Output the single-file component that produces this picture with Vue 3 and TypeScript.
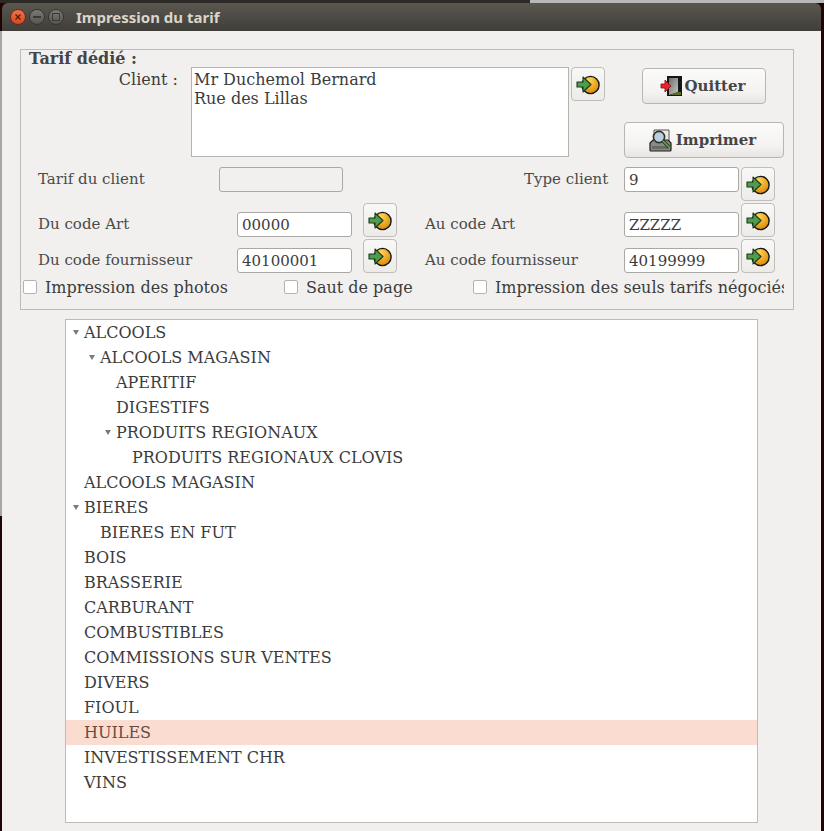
<script setup lang="ts">
interface TreeRow {
  label: string
  level: number
  open?: boolean
  selected?: boolean
}

const rows: TreeRow[] = [
  { label: 'ALCOOLS', level: 0, open: true },
  { label: 'ALCOOLS MAGASIN', level: 1, open: true },
  { label: 'APERITIF', level: 2 },
  { label: 'DIGESTIFS', level: 2 },
  { label: 'PRODUITS REGIONAUX', level: 2, open: true },
  { label: 'PRODUITS REGIONAUX CLOVIS', level: 3 },
  { label: 'ALCOOLS MAGASIN', level: 0 },
  { label: 'BIERES', level: 0, open: true },
  { label: 'BIERES EN FUT', level: 1 },
  { label: 'BOIS', level: 0 },
  { label: 'BRASSERIE', level: 0 },
  { label: 'CARBURANT', level: 0 },
  { label: 'COMBUSTIBLES', level: 0 },
  { label: 'COMMISSIONS SUR VENTES', level: 0 },
  { label: 'DIVERS', level: 0 },
  { label: 'FIOUL', level: 0 },
  { label: 'HUILES', level: 0, selected: true },
  { label: 'INVESTISSEMENT CHR', level: 0 },
  { label: 'VINS', level: 0 }
]

const codeRows = [
  { left: 'Du code Art', from: '00000', right: 'Au code Art', to: 'ZZZZZ' },
  { left: 'Du code fournisseur', from: '40100001', right: 'Au code fournisseur', to: '40199999' }
]
</script>

<template>
  <div class="desktop">
    <div class="window">
      <div class="titlebar">
        <span class="ctl close">
          <svg width="8" height="8" viewBox="0 0 8 8"><path d="M1.5 1.5l5 5M6.5 1.5l-5 5" stroke="#5a1a08" stroke-width="1.3" /></svg>
        </span>
        <span class="ctl"><span class="minus"></span></span>
        <span class="ctl"><span class="square"></span></span>
        <span class="title">Impression du tarif</span>
      </div>
      <div class="body">
        <fieldset class="group">
          <div class="legend">Tarif dédié :</div>
          <div class="client-row">
            <span class="client-label">Client :</span>
            <div class="client-box">Mr Duchemol Bernard<br />Rue des Lillas</div>
            <button class="go go-client"><svg class="go-icon" viewBox="0 0 24 20"><use href="#go" /></svg></button>
            <div class="actions">
              <button class="action quit">
                <svg width="23" height="22" viewBox="0 0 23 22">
                  <defs>
                    <linearGradient id="door" x1="0" y1="0" x2="1" y2="1">
                      <stop offset="0" stop-color="#6f716e" />
                      <stop offset="1" stop-color="#c4c6c2" />
                    </linearGradient>
                  </defs>
                  <rect x="7" y="1" width="15" height="20" fill="#161616" />
                  <path d="M9 3h9v14l-9 3z" fill="url(#door)" />
                  <path d="M18 17l3-0v3H10z" fill="#5c6a2c" />
                  <path d="M1 9h4V5l6 6-6 6v-4H1z" fill="#e8232c" stroke="#96101a" stroke-width=".9" stroke-linejoin="round" />
                </svg>
                Quitter
              </button>
              <button class="action print">
                <svg width="23" height="23" viewBox="0 0 23 23">
                  <path d="M5 1h15v12H5z" fill="#eceae6" stroke="#555" />
                  <path d="M1 14l3-3h15l3 3v7a1 1 0 0 1-1 1H2a1 1 0 0 1-1-1z" fill="#8a8a86" stroke="#1e1e1e" stroke-width="1.2" />
                  <path d="M3 17h17v3H3z" fill="#6a6a67" />
                  <circle cx="10" cy="8" r="5.6" fill="#b9cede" stroke="#2f2f2f" stroke-width="1.6" />
                  <path d="M14 12l6 6" stroke="#1f3a18" stroke-width="3.4" />
                  <path d="M14 12l6 6" stroke="#6aa84a" stroke-width="1.7" />
                </svg>
                Imprimer
              </button>
            </div>
          </div>

          <div class="form-row tarif-row">
            <span class="label first">Tarif du client</span>
            <span class="input empty"></span>
            <span class="label type-label">Type client</span>
            <span class="input right-input">9</span>
            <button class="go go-type"><svg class="go-icon" viewBox="0 0 24 20"><use href="#go" /></svg></button>
          </div>

          <div v-for="row in codeRows" :key="row.left" class="form-row code-row">
            <span class="label first">{{ row.left }}</span>
            <span class="input">{{ row.from }}</span>
            <button class="go"><svg class="go-icon" viewBox="0 0 24 20"><use href="#go" /></svg></button>
            <span class="label second">{{ row.right }}</span>
            <span class="input right-input">{{ row.to }}</span>
            <button class="go"><svg class="go-icon" viewBox="0 0 24 20"><use href="#go" /></svg></button>
          </div>

          <div class="checks">
            <label class="check c1"><span class="box"></span>Impression des photos</label>
            <label class="check c2"><span class="box"></span>Saut de page</label>
            <label class="check c3"><span class="box"></span><span class="clip">Impression des seuls tarifs négociés</span></label>
          </div>
        </fieldset>

        <div class="tree">
          <div
            v-for="(row, i) in rows"
            :key="i"
            class="tree-row"
            :class="{ selected: row.selected }"
            :style="{ paddingLeft: 18 + row.level * 16 + 'px' }"
          >
            <span v-if="row.open" class="arrow"></span>
            {{ row.label }}
          </div>
        </div>
      </div>
    </div>

    <svg width="0" height="0" class="defs">
      <defs>
        <radialGradient id="ball" cx="40%" cy="25%" r="80%">
          <stop offset="0" stop-color="#ffd65a" />
          <stop offset="1" stop-color="#d98600" />
        </radialGradient>
        <g id="go">
          <circle cx="14.5" cy="10" r="8.6" fill="url(#ball)" stroke="#161616" stroke-width="1.4" />
          <path d="M1 7h6V2l8 7.5L7 17v-5H1z" fill="#4f9d4c" stroke="#1c3a1c" stroke-width="1.1" stroke-linejoin="round" />
        </g>
      </defs>
    </svg>
  </div>
</template>

<style>
html,
body {
  margin: 0;
  background: #1a0508;
}
</style>

<style scoped>
.desktop {
  width: 824px;
  height: 831px;
  overflow: hidden;
  padding: 3px 0 0 2px;
  box-sizing: border-box;
  background:
    linear-gradient(#b8b8b8, #b8b8b8) 530px 0 / 294px 3px no-repeat,
    linear-gradient(#2c2a26, #2c2a26) 0 0 / 530px 3px no-repeat,
    linear-gradient(#a6a6a4, #a6a6a4) 0 31px / 2px 485px no-repeat,
    #1f0406;
  font-family: "DejaVu Serif", serif;
  color: #3c3c3c;
}

.defs {
  position: absolute;
}

.window {
  width: 819px;
  height: 828px;
}

.titlebar {
  height: 28px;
  display: flex;
  align-items: center;
  padding-left: 8px;
  gap: 3px;
  border-radius: 6px 6px 0 0;
  background: linear-gradient(#5a574e, #3f3e39);
}

.ctl {
  width: 16px;
  height: 16px;
  border-radius: 50%;
  display: flex;
  align-items: center;
  justify-content: center;
  background: linear-gradient(#7b7a73, #55544e);
  border: 1px solid #35342f;
  box-sizing: border-box;
}

.close {
  background: linear-gradient(#f0744a, #d4481f);
  border-color: #6c2a14;
}

.minus {
  width: 8px;
  height: 2px;
  background: #3a3934;
}

.square {
  width: 6px;
  height: 6px;
  border: 1px solid #3a3934;
}

.title {
  margin-left: 9px;
  font: bold 15px "Noto Sans", sans-serif;
  color: #d8d5cc;
}

.body {
  height: 800px;
  padding: 18px 0 0 18px;
  box-sizing: border-box;
  background: #f1f0ee;
}

.group {
  margin: 0;
  padding: 0;
  width: 774px;
  height: 261px;
  box-sizing: border-box;
  border: 1px solid #bdbbb7;
  display: block;
}

.legend {
  font-weight: bold;
  font-size: 16px;
  line-height: 18px;
  margin-left: 8px;
  height: 17px;
  color: #444;
}

.client-row {
  display: flex;
  height: 100px;
}

.client-label {
  font-size: 16px;
  width: 157px;
  text-align: right;
  margin-right: 13px;
  line-height: 26px;
}

.client-box {
  width: 378px;
  height: 90px;
  box-sizing: border-box;
  border: 1px solid #b6b4b0;
  background: #fff;
  padding: 2px 2px;
  font-size: 16px;
  line-height: 19px;
}

.actions {
  display: flex;
  flex-direction: column;
  align-items: flex-end;
  width: 179px;
}

.action {
  display: flex;
  align-items: center;
  justify-content: center;
  font-family: inherit;
  font-weight: bold;
  font-size: 15px;
  color: #454545;
  border: 1px solid #b8b6b2;
  border-radius: 4px;
  background: linear-gradient(#fbfbfa, #f3f2f0 70%, #e6e5e2);
  height: 36px;
}

.quit {
  width: 124px;
  margin: 1px 18px 0 0;
  gap: 2px;
  padding: 0 3px 0 0;
}

.print {
  width: 160px;
  margin-top: 18px;
  gap: 4px;
  padding: 0 3px 0 0;
}

.go {
  width: 34px;
  height: 34px;
  padding: 0;
  flex: none;
  display: flex;
  align-items: flex-start;
  justify-content: center;
  border: 1px solid #c0beba;
  border-radius: 4px;
  background: linear-gradient(#f8f8f7, #ecebe8);
}

.go-icon {
  width: 24px;
  height: 20px;
  margin-top: 7px;
}

.go-client {
  margin-left: 2px;
}

.form-row {
  display: flex;
  align-items: flex-start;
  height: 36px;
}

.label {
  font-size: 15px;
  line-height: 22px;
  color: #4a4a4a;
}

.tarif-row .label {
  margin-top: 1px;
}

.first {
  margin-left: 17px;
  width: 199px;
  flex: none;
}

.tarif-row .first {
  width: 181px;
}

.tarif-row .type-label {
  margin-left: 181px;
  width: 100px;
}

.code-row .label {
  margin-top: 10px;
}

.second {
  width: 199px;
  margin-left: 28px;
  flex: none;
}

.input {
  width: 115px;
  height: 25px;
  flex: none;
  box-sizing: border-box;
  border: 1px solid #aaa8a4;
  border-radius: 3px;
  background: #fff;
  padding: 0 4px;
  font-size: 15px;
  line-height: 24px;
  color: #3c3c3c;
}

.code-row .input {
  margin-top: 9px;
}

.empty {
  width: 124px;
  background: #f1f0ee;
}

.go-type {
  margin: 0 0 0 2px;
}

.code-row .go {
  margin-left: 11px;
}

.code-row .right-input + .go {
  margin-left: 2px;
}

.checks {
  display: flex;
  align-items: center;
  height: 22px;
  margin-top: 1px;
  font-size: 16px;
}

.check {
  display: flex;
  align-items: center;
  flex: none;
}

.box {
  width: 14px;
  height: 14px;
  box-sizing: border-box;
  flex: none;
  border: 1px solid #b5b3af;
  border-radius: 2px;
  background: #fff;
  margin-right: 8px;
}

.c1 {
  margin-left: 2px;
  width: 261px;
}

.c2 {
  width: 189px;
}

.clip {
  display: block;
  width: 289px;
  overflow: hidden;
  white-space: nowrap;
}

.tree {
  width: 693px;
  height: 504px;
  margin: 9px 0 0 45px;
  box-sizing: border-box;
  border: 1px solid #bdbbb7;
  background: #fff;
}

.tree-row {
  position: relative;
  height: 25px;
  line-height: 25px;
  font-size: 16px;
  color: #3c3c3c;
}

.selected {
  background: #fbdcd1;
  color: #6b4a40;
}

.arrow {
  position: absolute;
  width: 0;
  height: 0;
  margin-left: -11px;
  margin-top: 10px;
  border-left: 3.5px solid transparent;
  border-right: 3.5px solid transparent;
  border-top: 5px solid #7a7a7a;
}
</style>
